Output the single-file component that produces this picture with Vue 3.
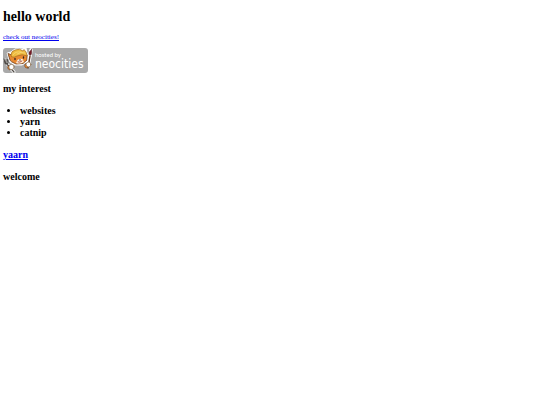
<script setup>
const interests = ['websites', 'yarn', 'catnip']
</script>

<template>
  <main class="page">
    <h1>hello world</h1>
    <a class="small" href="#neocities">check out neocities!</a>
    <a class="badge" href="#neocities" aria-label="hosted by neocities">
      <svg width="85" height="25" viewBox="0 0 85 25">
        <rect width="85" height="25" rx="3" fill="#a9a9a9" />
        <!-- cat face -->
        <g stroke-linejoin="round" stroke-linecap="round">
          <path d="M4.500 5 8 4 12 1 19 1 23 0 24 5 26 8 24 14 19 17 12 17 7 14Z" fill="#fff" stroke="#fff" stroke-width="1" />
          <path d="M7 12 5 5.500 9 7 22 4 24 8 24 12 20 15.500 13 16 9 14Z" fill="#e98a32" stroke="#6c3c1c" stroke-width=".8" />
          <path d="M8 7Q8 3 12 2Q17 0 20 3L21 1.500 23 4L24.500 8Q19 5.500 14 8Q11 10 9 9Z" fill="#eebb3f" stroke="#a66b20" stroke-width=".7" />
          <path d="M10 7Q12 3 18 4M14 6Q18 3 22 5" fill="none" stroke="#f7d879" stroke-width=".8" />
          <path d="M14.500 12Q17 10 19.500 11L21 14Q17 16.500 13 15Z" fill="#fff0dc" />
          <path d="M12 10.500V11.500M20.500 9V10" stroke="#30231d" stroke-width="1.300" />
          <path d="M16 11.500H18L17 13Z" fill="#30231d" />
          <path d="M15 14Q17 15 19 13" fill="none" stroke="#a64331" stroke-width=".9" />
        </g>
        <!-- fork and paw -->
        <g fill="none" stroke-linecap="round" stroke-linejoin="round">
          <path d="M2 12 5 17 11 24" stroke="#fff" stroke-width="3" />
          <path d="M1 11 2 15Q4 17 5 15L4.500 11.500M3 11.500V15L11 24" stroke="#514d49" stroke-width="1.200" />
          <path d="M5 18Q4 21 7 22L9 20Z" fill="#e98a32" stroke="#6c3c1c" stroke-width=".7" />
          <circle cx="8.500" cy="19" r="2.600" fill="#fff" stroke="#81603b" stroke-width=".6" />
        </g>
        <!-- paintbrush and paw -->
        <g stroke-linecap="round" stroke-linejoin="round">
          <path d="M28 2 27 8 25 18" fill="none" stroke="#fff" stroke-width="3.500" />
          <path d="M27 8 25 20" stroke="#6a4128" stroke-width="1.500" />
          <path d="M28.500 1.500Q26 3 26 6.500L28 7Q29 5 28.500 1.500Z" fill="#781b25" stroke="#4f1b20" stroke-width=".5" />
          <path d="M22 16Q21 20 24 20L26 18Z" fill="#e98a32" stroke="#6c3c1c" stroke-width=".6" />
          <circle cx="25.500" cy="16.500" r="2.400" fill="#fff" stroke="#81603b" stroke-width=".6" />
        </g>
        <text class="hosted" x="32" y="9">hosted by</text>
        <text class="brand" x="32" y="20">neocities</text>
      </svg>
    </a>
    <h3>my interest</h3>
    <ul>
      <li v-for="item in interests" :key="item">{{ item }}</li>
    </ul>
    <h3><a href="#yaarn">yaarn</a></h3>
    <h3>welcome</h3>
  </main>
</template>

<style>
body {
  background: #fff;
}
</style>

<style scoped>
.page {
  padding: 9px 3px;
  color: #000;
  font-family: "Liberation Serif", serif;
  font-size: 10px;
  line-height: 11px;
}
h1 {
  margin: 0 0 9px;
  font-size: 14px;
  line-height: 16px;
}
a {
  color: #0000ee;
}
.small {
  display: block;
  width: fit-content;
  margin-bottom: 7px;
  font-size: 7px;
  line-height: 7px;
}
.badge {
  display: block;
  width: fit-content;
}
.badge svg {
  display: block;
}
.hosted,
.brand {
  fill: #fff;
}
.hosted {
  font-family: Lato, sans-serif;
  font-size: 6px;
}
.brand {
  font-family: "DejaVu Sans Condensed", "DejaVu Sans", sans-serif;
  font-size: 12px;
}
h3 {
  margin: 10px 0;
  font-size: 10px;
  line-height: 12px;
}
ul {
  margin: 0 0 11px;
  padding-left: 17px;
  font-weight: bold;
}
</style>
